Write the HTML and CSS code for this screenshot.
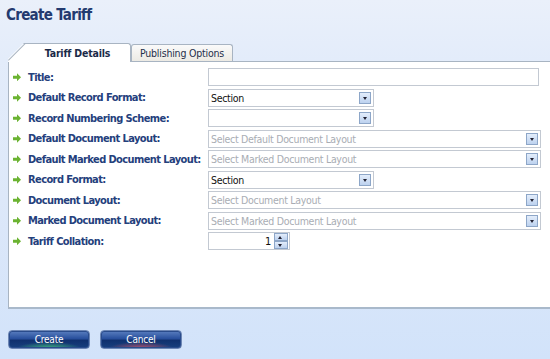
FILE: index.html
```
<!DOCTYPE html>
<html>
<head>
<meta charset="utf-8">
<link rel="stylesheet" href="styles.css">
</head>
<body>
<div class="page">
  <h1 class="title">Create Tariff</h1>
  <div class="tabs">
    <div class="tab active">Tariff Details</div>
    <div class="tab">Publishing Options</div>
  </div>
  <div class="panel">
    <div class="row"><label class="lbl"><span class="arr"></span>Title:</label><div class="field text wide"></div></div>
    <div class="row"><label class="lbl"><span class="arr"></span>Default Record Format:</label><div class="field combo short"><span class="val">Section</span><span class="btn"></span></div></div>
    <div class="row"><label class="lbl"><span class="arr"></span>Record Numbering Scheme:</label><div class="field combo short"><span class="val"></span><span class="btn"></span></div></div>
    <div class="row"><label class="lbl"><span class="arr"></span>Default Document Layout:</label><div class="field combo full"><span class="val ph">Select Default Document Layout</span><span class="btn"></span></div></div>
    <div class="row"><label class="lbl"><span class="arr"></span>Default Marked Document Layout:</label><div class="field combo full"><span class="val ph">Select Marked Document Layout</span><span class="btn"></span></div></div>
    <div class="row"><label class="lbl"><span class="arr"></span>Record Format:</label><div class="field combo short"><span class="val">Section</span><span class="btn"></span></div></div>
    <div class="row"><label class="lbl"><span class="arr"></span>Document Layout:</label><div class="field combo full"><span class="val ph">Select Document Layout</span><span class="btn"></span></div></div>
    <div class="row"><label class="lbl"><span class="arr"></span>Marked Document Layout:</label><div class="field combo full"><span class="val ph">Select Marked Document Layout</span><span class="btn"></span></div></div>
    <div class="row"><label class="lbl"><span class="arr"></span>Tariff Collation:</label><div class="field spin"><span class="num">1</span><span class="spinbtns"><span class="up"></span><span class="down"></span></span></div></div>
  </div>
  <div class="actions">
    <button class="abtn create">Create</button>
    <button class="abtn cancel">Cancel</button>
  </div>
</div>
</body>
</html>
```
FILE: styles.css
```
* { box-sizing: border-box; }
html, body { margin: 0; padding: 0; }
body {
  width: 550px; height: 359px; overflow: hidden;
  font-family: "DejaVu Sans Condensed", "DejaVu Sans", sans-serif;
  background: linear-gradient(#eaf0fa 0px, #e3ecfa 60px, #dde8f9 200px, #d2e3fa 359px);
}
.page { padding: 0 0 0 8px; }
.title {
  margin: 0 0 0 -2px; padding: 6px 0 0 0;
  font-family: "DejaVu Sans Condensed", "DejaVu Sans", sans-serif;
  font-size: 15px; font-weight: bold; color: #233a6f;
  letter-spacing: -0.7px; height: 43px; line-height: 18px;
}
.tabs { display: flex; height: 18px; align-items: flex-end; }
.tab {
  font-size: 10.5px; color: #1f2e4a; height: 17px; line-height: 16px;
  padding: 0 7px; background: linear-gradient(#fafafa, #eceae4);
  border: 1px solid #a8b4c2; border-bottom: none; border-radius: 3px 3px 0 0;
  letter-spacing: -0.2px; width: 102px; text-align: center;
}
.tab.active {
  font-weight: bold; background: #fff; height: 19px; line-height: 18px;
  width: 123px; padding-left: 24px; border-radius: 0 3px 0 0;
  border-left: none; position: relative; color: #1a2a48;
  clip-path: polygon(16px 0, 100% 0, 100% 100%, 0 100%, 0 16px);
  margin-bottom: -1px; z-index: 1;
}
.tab.active::before {
  content: ""; position: absolute; left: 0; top: 0; width: 24px; height: 24px;
  border-top: 1px solid #a8b4c2; transform-origin: 0 0;
  transform: translate(0px, 16px) rotate(-45deg);
}
.panel {
  background: #fff; border: 1px solid #a8b4c2; border-right: none;
  height: 248px; padding: 5px 0 0 4px;
  border-bottom: 2px solid #a9b9cb;
}
.row { display: flex; align-items: center; height: 20.5px; }
.lbl {
  width: 195px; display: flex; align-items: center;
  font-size: 11px; font-weight: bold; color: #24407c; letter-spacing: -0.6px;
  white-space: nowrap;
}
.arr {
  width: 8px; height: 8px; margin-right: 7px; flex: none;
  background: #6bb331;
  clip-path: polygon(0 2.5px, 4px 2.5px, 4px 0, 8px 4px, 4px 8px, 4px 5.5px, 0 5.5px);
}
.field {
  height: 18px; border: 1px solid #c3c9d2; background: #fff;
  display: flex; align-items: center; font-size: 10.5px; letter-spacing: -0.3px;
}
.text.wide { width: 331px; height: 18px; }
.combo.short { width: 166px; }
.combo.full { width: 333px; }
.val { flex: 1; padding-left: 2px; color: #111; }
.val.ph { color: #a9adb4; }
.btn {
  width: 12px; height: 12px; margin-right: 2px; flex: none;
  border: 1px solid #8da6c8; background: linear-gradient(#e3edfb, #bdd2ef);
  position: relative;
}
.btn::after {
  content: ""; position: absolute; left: 3px; top: 4px;
  border-left: 2.5px solid transparent; border-right: 2.5px solid transparent;
  border-top: 3px solid #223;
}
.spin { width: 82px; height: 18px; }
.num { flex: 1; text-align: right; padding-right: 3px; color: #111; font-size: 11px; }
.spinbtns { width: 14px; height: 16px; display: flex; flex-direction: column; margin-right: 1px; }
.spinbtns span {
  flex: 1; border: 1px solid #8da6c8; background: linear-gradient(#e3edfb, #bdd2ef); position: relative;
}
.spinbtns .up::after {
  content: ""; position: absolute; left: 3px; top: 2px;
  border-left: 2.5px solid transparent; border-right: 2.5px solid transparent;
  border-bottom: 3px solid #223;
}
.spinbtns .down::after {
  content: ""; position: absolute; left: 3px; top: 2px;
  border-left: 2.5px solid transparent; border-right: 2.5px solid transparent;
  border-top: 3px solid #223;
}
.actions { display: flex; gap: 10px; padding-top: 21px; }
.abtn {
  width: 82px; height: 19px; border-radius: 4px; border: 1px solid #6d86b4;
  color: #fff; font-family: "DejaVu Sans Condensed", "DejaVu Sans", sans-serif; font-size: 10px; letter-spacing: -0.2px;
  padding: 0; box-shadow: inset 0 0 0 1px #2a4c8c;
}
.create { background: radial-gradient(ellipse 40% 35% at 50% 100%, #3fb07a, rgba(40,90,160,0) 100%), linear-gradient(#5a7fc0 0%, #284f9c 45%, #10306e 55%, #18407e 100%); }
.cancel { background: radial-gradient(ellipse 40% 35% at 50% 100%, #b0506a, rgba(40,90,160,0) 100%), linear-gradient(#5a7fc0 0%, #284f9c 45%, #10306e 55%, #18407e 100%); }
```
